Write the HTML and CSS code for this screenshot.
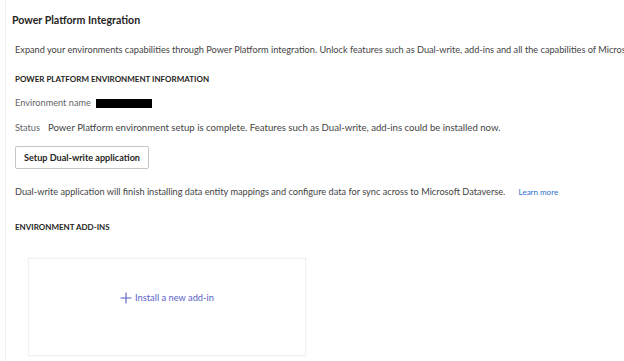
FILE: index.html
```html
<!DOCTYPE html>
<html lang="en">
<head>
    <meta charset="UTF-8">
    <meta name="viewport" content="width=device-width, initial-scale=1.0">
    <title>Power Platform Integration</title>
    <link rel="stylesheet" href="styles.css">
</head>
<body>
    <div class="page">
        <h1 class="title">Power Platform Integration</h1>

        <p class="intro">Expand your environments capabilities through Power Platform integration. Unlock features such as Dual-write, add-ins and all the capabilities of Microsoft Power Platform.</p>

        <h2 class="section-head">Power Platform environment information</h2>

        <div class="field">
            <span class="label">Environment name</span>
            <span class="redacted"></span>
        </div>

        <div class="field status">
            <span class="label">Status</span>
            <span class="value">Power Platform environment setup is complete. Features such as Dual-write, add-ins could be installed now.</span>
        </div>

        <button class="btn">Setup Dual-write application</button>

        <p class="note">Dual-write application will finish installing data entity mappings and configure data for sync across to Microsoft Dataverse. <a href="#" class="link">Learn more</a></p>

        <h2 class="section-head addins-head">Environment add-ins</h2>

        <div class="addin-card">
            <a href="#" class="install">
                <svg class="plus" width="12" height="12" viewBox="0 0 12 12">
                    <path d="M6 0.5V11.5M0.5 6H11.5" stroke="#5b5fc7" stroke-width="1.1" fill="none"/>
                </svg>
                Install a new add-in
            </a>
        </div>
    </div>
</body>
</html>
```

FILE: styles.css
```css
body {
    margin: 0;
    background-color: #ffffff;
    font-family: Lato, "Open Sans", Arial, sans-serif;
    color: #323130;
    overflow: hidden;
}

.page {
    margin-left: 5px;
    border-left: 1px solid #f0f0f0;
    padding: 11px 0 0 9px;
    min-height: 361px;
    box-sizing: border-box;
    white-space: nowrap;
}

.title {
    font-size: 10.6px;
    font-weight: 700;
    margin: 0 0 0 -3px;
    line-height: 18px;
    color: #252423;
}

.intro {
    font-size: 9.2px;
    margin: 13px 0 0 0;
    line-height: 16px;
    color: #444;
}

.section-head {
    font-size: 8px;
    font-weight: 700;
    text-transform: uppercase;
    margin: 15px 0 0 0;
    line-height: 12px;
    color: #252423;
}

.field {
    display: flex;
    align-items: center;
    gap: 5px;
    font-size: 9.2px;
    line-height: 14px;
    margin-top: 11px;
    color: #444;
}

.field .label {
    color: #666;
}

.field .value {
    font-size: 9.6px;
}

.redacted {
    display: inline-block;
    width: 56px;
    height: 9px;
    background-color: #000;
}

.status {
    margin-top: 11px;
    gap: 8px;
}

.btn {
    display: block;
    margin-top: 11px;
    height: 23px;
    padding: 0 8px;
    border: 1px solid #c8c6c4;
    border-radius: 2px;
    background-color: #fff;
    font-family: inherit;
    font-size: 9.1px;
    font-weight: 700;
    color: #252423;
}

.note {
    font-size: 9.2px;
    margin: 16px 0 0 0;
    line-height: 14px;
    color: #444;
}

.link {
    font-size: 8px;
    color: #2f6fd0;
    text-decoration: none;
    margin-left: 11px;
}

.addins-head {
    margin-top: 22px;
}

.addin-card {
    margin: 25px 0 0 13px;
    width: 276px;
    height: 96px;
    border: 1px solid #f0f0f0;
    box-shadow: 0 0 2px rgba(0, 0, 0, 0.04);
    display: flex;
    align-items: center;
    justify-content: center;
}

.install {
    display: flex;
    align-items: center;
    gap: 3px;
    font-size: 9.3px;
    color: #5b5fc7;
    text-decoration: none;
    margin-top: -19px;
}
```
